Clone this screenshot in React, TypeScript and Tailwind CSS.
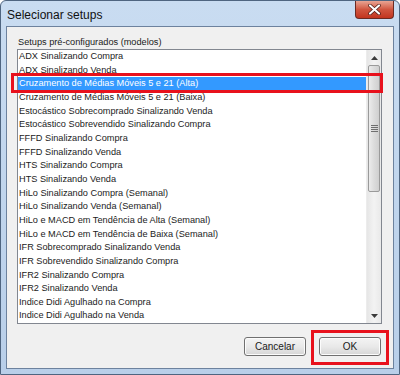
import React from 'react'

const SETUPS = [
  'ADX Sinalizando Compra',
  'ADX Sinalizando Venda',
  'Cruzamento de Médias Móveis 5 e 21 (Alta)',
  'Cruzamento de Médias Móveis 5 e 21 (Baixa)',
  'Estocástico Sobrecomprado Sinalizando Venda',
  'Estocástico Sobrevendido Sinalizando Compra',
  'FFFD Sinalizando Compra',
  'FFFD Sinalizando Venda',
  'HTS Sinalizando Compra',
  'HTS Sinalizando Venda',
  'HiLo Sinalizando Compra (Semanal)',
  'HiLo Sinalizando Venda (Semanal)',
  'HiLo e MACD em Tendência de Alta (Semanal)',
  'HiLo e MACD em Tendência de Baixa (Semanal)',
  'IFR Sobrecomprado Sinalizando Venda',
  'IFR Sobrevendido Sinalizando Compra',
  'IFR2 Sinalizando Compra',
  'IFR2 Sinalizando Venda',
  'Indice Didi Agulhado na Compra',
  'Indice Didi Agulhado na Venda',
]

const SELECTED = 2

function CloseButton() {
  return (
    <div className="w-[39px] h-[18px] rounded-b-[4px] border border-t-0 border-[#6b2a22] bg-gradient-to-b from-[#e8a493] via-[#d0553f] to-[#c2341e] flex items-center justify-center">
      <svg width="13" height="11" viewBox="0 0 13 11">
        <path d="M2 1.5 L11 9.5 M11 1.5 L2 9.5" stroke="#4a1a14" strokeWidth="3.6" strokeLinecap="round" />
        <path d="M2 1.5 L11 9.5 M11 1.5 L2 9.5" stroke="#ffffff" strokeWidth="2.2" strokeLinecap="round" />
      </svg>
    </div>
  )
}

function Scrollbar() {
  return (
    <div className="w-[15px] flex flex-col bg-gradient-to-r from-[#e6e6e6] via-[#f3f3f3] to-[#e9e9e9] border-l border-[#ececec]">
      <div className="h-[15px] flex items-center justify-center">
        <svg width="7" height="4" viewBox="0 0 7 4"><path d="M0 4 L3.5 0 L7 4 Z" fill="#3b3b3b" /></svg>
      </div>
      <div className="h-[127px] mx-[1px] rounded-[2px] border border-[#9a9a9a] bg-gradient-to-r from-[#ececec] via-[#dcdcdc] to-[#cfcfcf] flex items-center justify-center">
        <div className="flex flex-col gap-[1px]">
          <div className="w-[7px] h-[1px] bg-[#6f6f6f]" />
          <div className="w-[7px] h-[1px] bg-[#6f6f6f]" />
          <div className="w-[7px] h-[1px] bg-[#6f6f6f]" />
          <div className="w-[7px] h-[1px] bg-[#6f6f6f]" />
        </div>
      </div>
      <div className="flex-1" />
      <div className="h-[15px] flex items-center justify-center">
        <svg width="7" height="4" viewBox="0 0 7 4"><path d="M0 0 L7 0 L3.5 4 Z" fill="#3b3b3b" /></svg>
      </div>
    </div>
  )
}

function Btn({ label }: { label: string }) {
  return (
    <button
      type="button"
      className="block w-[62px] h-[19px] rounded-[3px] border border-[#707070] bg-gradient-to-b from-[#f4f4f4] via-[#e9e9e9] to-[#d6d6d6] text-[10px] text-[#1b1b1b] shadow-[inset_0_0_0_1px_#fcfcfc]"
    >
      {label}
    </button>
  )
}

export default function App() {
  return (
    <div
      className="w-[400px] h-[375px] flex flex-col border border-[#4f6580] rounded-t-[6px] bg-gradient-to-b from-[#c9dcf1] to-[#b9cfe9]"
      style={{ fontFamily: '"Liberation Sans", Arial, sans-serif' }}
    >
      <div className="h-[25px] flex items-start justify-between pl-[6px] pr-[5px]">
        <span className="mt-[5px] text-[12px] text-[#111]">Selecionar setups</span>
        <CloseButton />
      </div>

      <div className="flex-1 mx-[5px] mb-[5px] border border-[#6d829e] bg-[#f0f0f0] flex flex-col">
        <div className="pl-[11px] pt-[9px] pb-[1px] text-[9.2px] leading-[12px] text-[#1b1b1b]">
          Setups pré-configurados (modelos)
        </div>

        <div className="relative ml-[10px] mr-[11px] h-[275px] border border-[#828790] bg-white flex">
          <div className="flex-1 flex flex-col">
            {SETUPS.map((s, i) => (
              <div
                key={s}
                className={`h-[13.7px] pl-[1px] text-[9.2px] leading-[13.7px] whitespace-nowrap overflow-hidden ${
                  i === SELECTED ? 'bg-[#3399ff] text-white' : 'text-[#1b1b1b]'
                }`}
              >
                {s}
              </div>
            ))}
          </div>
          <Scrollbar />
          <div className="absolute left-[-7px] top-[23px] w-[372px] h-[20px] border-[3px] border-[#e8111c]" />
        </div>

        <div className="flex-1 flex items-end justify-end gap-[5px] pr-[4px] pb-[3px]">
          <div className="flex mb-[9px]">
            <Btn label="Cancelar" />
          </div>
          <div className="flex border-[3px] border-[#e8111c] pl-[5px] pr-[5px] pt-[4px] pb-[6px]">
            <Btn label="OK" />
          </div>
        </div>
      </div>
    </div>
  )
}
